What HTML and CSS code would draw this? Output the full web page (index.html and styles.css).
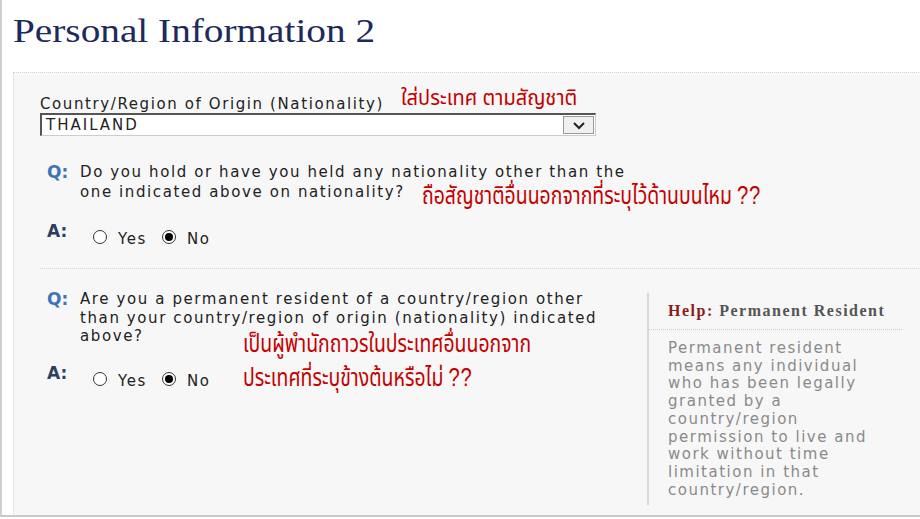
FILE: index.html
```html
<!DOCTYPE html>
<html>
<head>
<meta charset="utf-8">
<link rel="stylesheet" href="styles.css">
</head>
<body>
<div class="page">
  <h1 class="title"><span class="title-text">Personal Information 2</span></h1>
  <div class="panel">
    <div class="field">
      <div class="label-row">
        <span class="label">Country/Region of Origin (Nationality)</span>
        <span class="thai thai-small">ใส่ประเทศ ตามสัญชาติ</span>
      </div>
      <div class="select">
        <span class="select-value">THAILAND</span>
        <span class="select-btn">
          <svg width="14" height="9" viewBox="0 0 14 9"><path d="M2 2 L7 7 L12 2" fill="none" stroke="#222" stroke-width="2"/></svg>
        </span>
      </div>
    </div>

    <div class="qa qa-first">
      <div class="q-row">
        <span class="q-mark">Q:</span>
        <div class="q-text">Do you hold or have you held any nationality other than the<br>one indicated above on nationality?<span class="thai thai-inline">ถือสัญชาติอื่นนอกจากที่ระบุไว้ด้านบนไหม <b class="qq">??</b></span></div>
      </div>
      <div class="a-row">
        <span class="a-mark">A:</span>
        <span class="radio"></span><span class="opt">Yes</span>
        <span class="radio checked"></span><span class="opt">No</span>
      </div>
    </div>

    <div class="divider"></div>

    <div class="second">
      <div class="qa qa-second">
        <div class="q-row">
          <span class="q-mark">Q:</span>
          <div class="q-text q-text2">Are you a permanent resident of a country/region other than your country/region of origin (nationality) indicated above?</div>
        </div>
        <div class="a-row a-row2">
          <span class="a-mark">A:</span>
          <span class="radio"></span><span class="opt">Yes</span>
          <span class="radio checked"></span><span class="opt">No</span>
        </div>
        <div class="thai thai-block">เป็นผู้พำนักถาวรในประเทศอื่นนอกจาก<br>ประเทศที่ระบุข้างต้นหรือไม่ <b class="qq">??</b></div>
      </div>
      <aside class="help">
        <div class="help-title"><span class="help-key">Help:</span> Permanent Resident</div>
        <p class="help-body">Permanent resident means any individual who has been legally granted by a country/region permission to live and work without time limitation in that country/region.</p>
      </aside>
    </div>
  </div>
</div>
</body>
</html>
```

FILE: styles.css
```css
html, body {
  margin: 0;
  padding: 0;
  background: #fff;
}
.page {
  width: 918px;
  height: 515px;
  border-left: 2px solid #cfcfcf;
  border-bottom: 2px solid #c8c8c8;
  padding-left: 11px;
  overflow: hidden;
}
.title {
  margin: 0;
  padding-top: 12px;
  height: 72px;
  box-sizing: border-box;
  font-family: "Liberation Serif", serif;
  font-weight: normal;
  font-size: 33px;
  line-height: 38px;
  color: #1d2a5b;
}
.title-text {
  display: inline-block;
  transform: scaleX(1.19);
  transform-origin: left center;
}
.panel {
  height: 444px;
  box-sizing: border-box;
  background: #f7f7f7;
  border-top: 1px dotted #d6d6c6;
  border-left: 1px dotted #d6d6c6;
  padding: 22px 0 0 26px;
  font-family: "DejaVu Sans", Verdana, sans-serif;
  font-size: 15px;
  letter-spacing: 1.6px;
  color: #222;
}
.label-row {
  display: flex;
  align-items: flex-end;
  gap: 17px;
  height: 18px;
  line-height: 18px;
}
.thai {
  font-family: "Noto Sans Thai", "Noto Serif Thai", "Loma", "Garuda", sans-serif;
  letter-spacing: 0;
  color: #c40000;
  white-space: nowrap;
}
.thai-small {
  display: inline-block;
  font-size: 22px;
  line-height: 20px;
  transform: scaleX(0.91);
  transform-origin: left center;
  position: relative;
  top: -4px;
}
.select {
  display: flex;
  width: 556px;
  height: 23px;
  box-sizing: border-box;
  background: #fff;
  border-top: 2px solid #555;
  border-left: 2px solid #555;
  border-right: 1px solid #ccc;
  border-bottom: 1px solid #ccc;
}
.select-value {
  flex: 1;
  padding-left: 4px;
  line-height: 20px;
  font-size: 15px;
  letter-spacing: 2px;
}
.select-btn {
  width: 29px;
  margin: 1px 1px 1px 0;
  background: #f0f0f0;
  border: 1px solid #999;
  display: flex;
  align-items: center;
  justify-content: center;
}
.qa-first {
  margin-top: 26px;
  padding-left: 7px;
}
.q-row {
  display: flex;
}
.q-mark {
  width: 33px;
  flex: none;
  font-weight: bold;
  font-size: 17px;
  letter-spacing: 0;
  color: #3e73b8;
  line-height: 20px;
}
.a-mark {
  width: 46px;
  flex: none;
  font-weight: bold;
  font-size: 17px;
  letter-spacing: 0;
  color: #2f3f5f;
  position: relative;
  top: -6px;
}
.q-text {
  line-height: 20px;
}
.thai-inline {
  display: inline-block;
  vertical-align: top;
  height: 20px;
  font-size: 24px;
  line-height: 20px;
  margin-left: 17px;
  transform: scaleX(0.81);
  transform-origin: left center;
  position: relative;
  top: 3px;
}
.qq {
  font-family: "Liberation Sans", sans-serif;
  font-weight: normal;
  font-size: 25px;
  letter-spacing: 1px;
}
.a-row {
  display: flex;
  align-items: center;
  margin-top: 25px;
  height: 20px;
}
.radio {
  width: 14px;
  height: 14px;
  flex: none;
  box-sizing: border-box;
  border: 1px solid #333;
  border-radius: 50%;
  background: #fff;
  margin-right: 11px;
  display: inline-flex;
  align-items: center;
  justify-content: center;
}
.radio.checked::after {
  content: "";
  width: 8px;
  height: 8px;
  border-radius: 50%;
  background: #000;
}
.opt {
  margin-right: 15px;
  line-height: 20px;
  position: relative;
  top: 2px;
}
.divider {
  margin-top: 21px;
  border-top: 1px dotted #d8d8d8;
}
.second {
  display: flex;
}
.qa-second {
  width: 607px;
  flex: none;
  box-sizing: border-box;
  padding-left: 7px;
  padding-top: 21px;
  position: relative;
}
.qa-second .q-mark {
  line-height: 18.5px;
}
.q-text2 {
  line-height: 18.5px;
  width: 540px;
}
.a-row2 {
  margin-top: 23px;
}
.thai-block {
  position: absolute;
  left: 203px;
  top: 60px;
  font-size: 24px;
  line-height: 32px;
  transform: scaleX(0.81);
  transform-origin: left top;
}
.help {
  margin-top: 24px;
  width: 253px;
  height: 212px;
  border-left: 2px solid #d8d8d8;
}
.help-title {
  font-family: "Liberation Serif", serif;
  font-weight: bold;
  font-size: 16px;
  line-height: 18px;
  letter-spacing: 1.5px;
  color: #555;
  padding: 9px 0 9px 19px;
  border-bottom: 1px dotted #ccc;
}
.help-key {
  color: #8b1a1a;
}
.help-body {
  margin: 10px 0 0 19px;
  color: #8a8a8a;
  font-size: 15px;
  line-height: 17.7px;
  letter-spacing: 1.5px;
  width: 215px;
}
```
